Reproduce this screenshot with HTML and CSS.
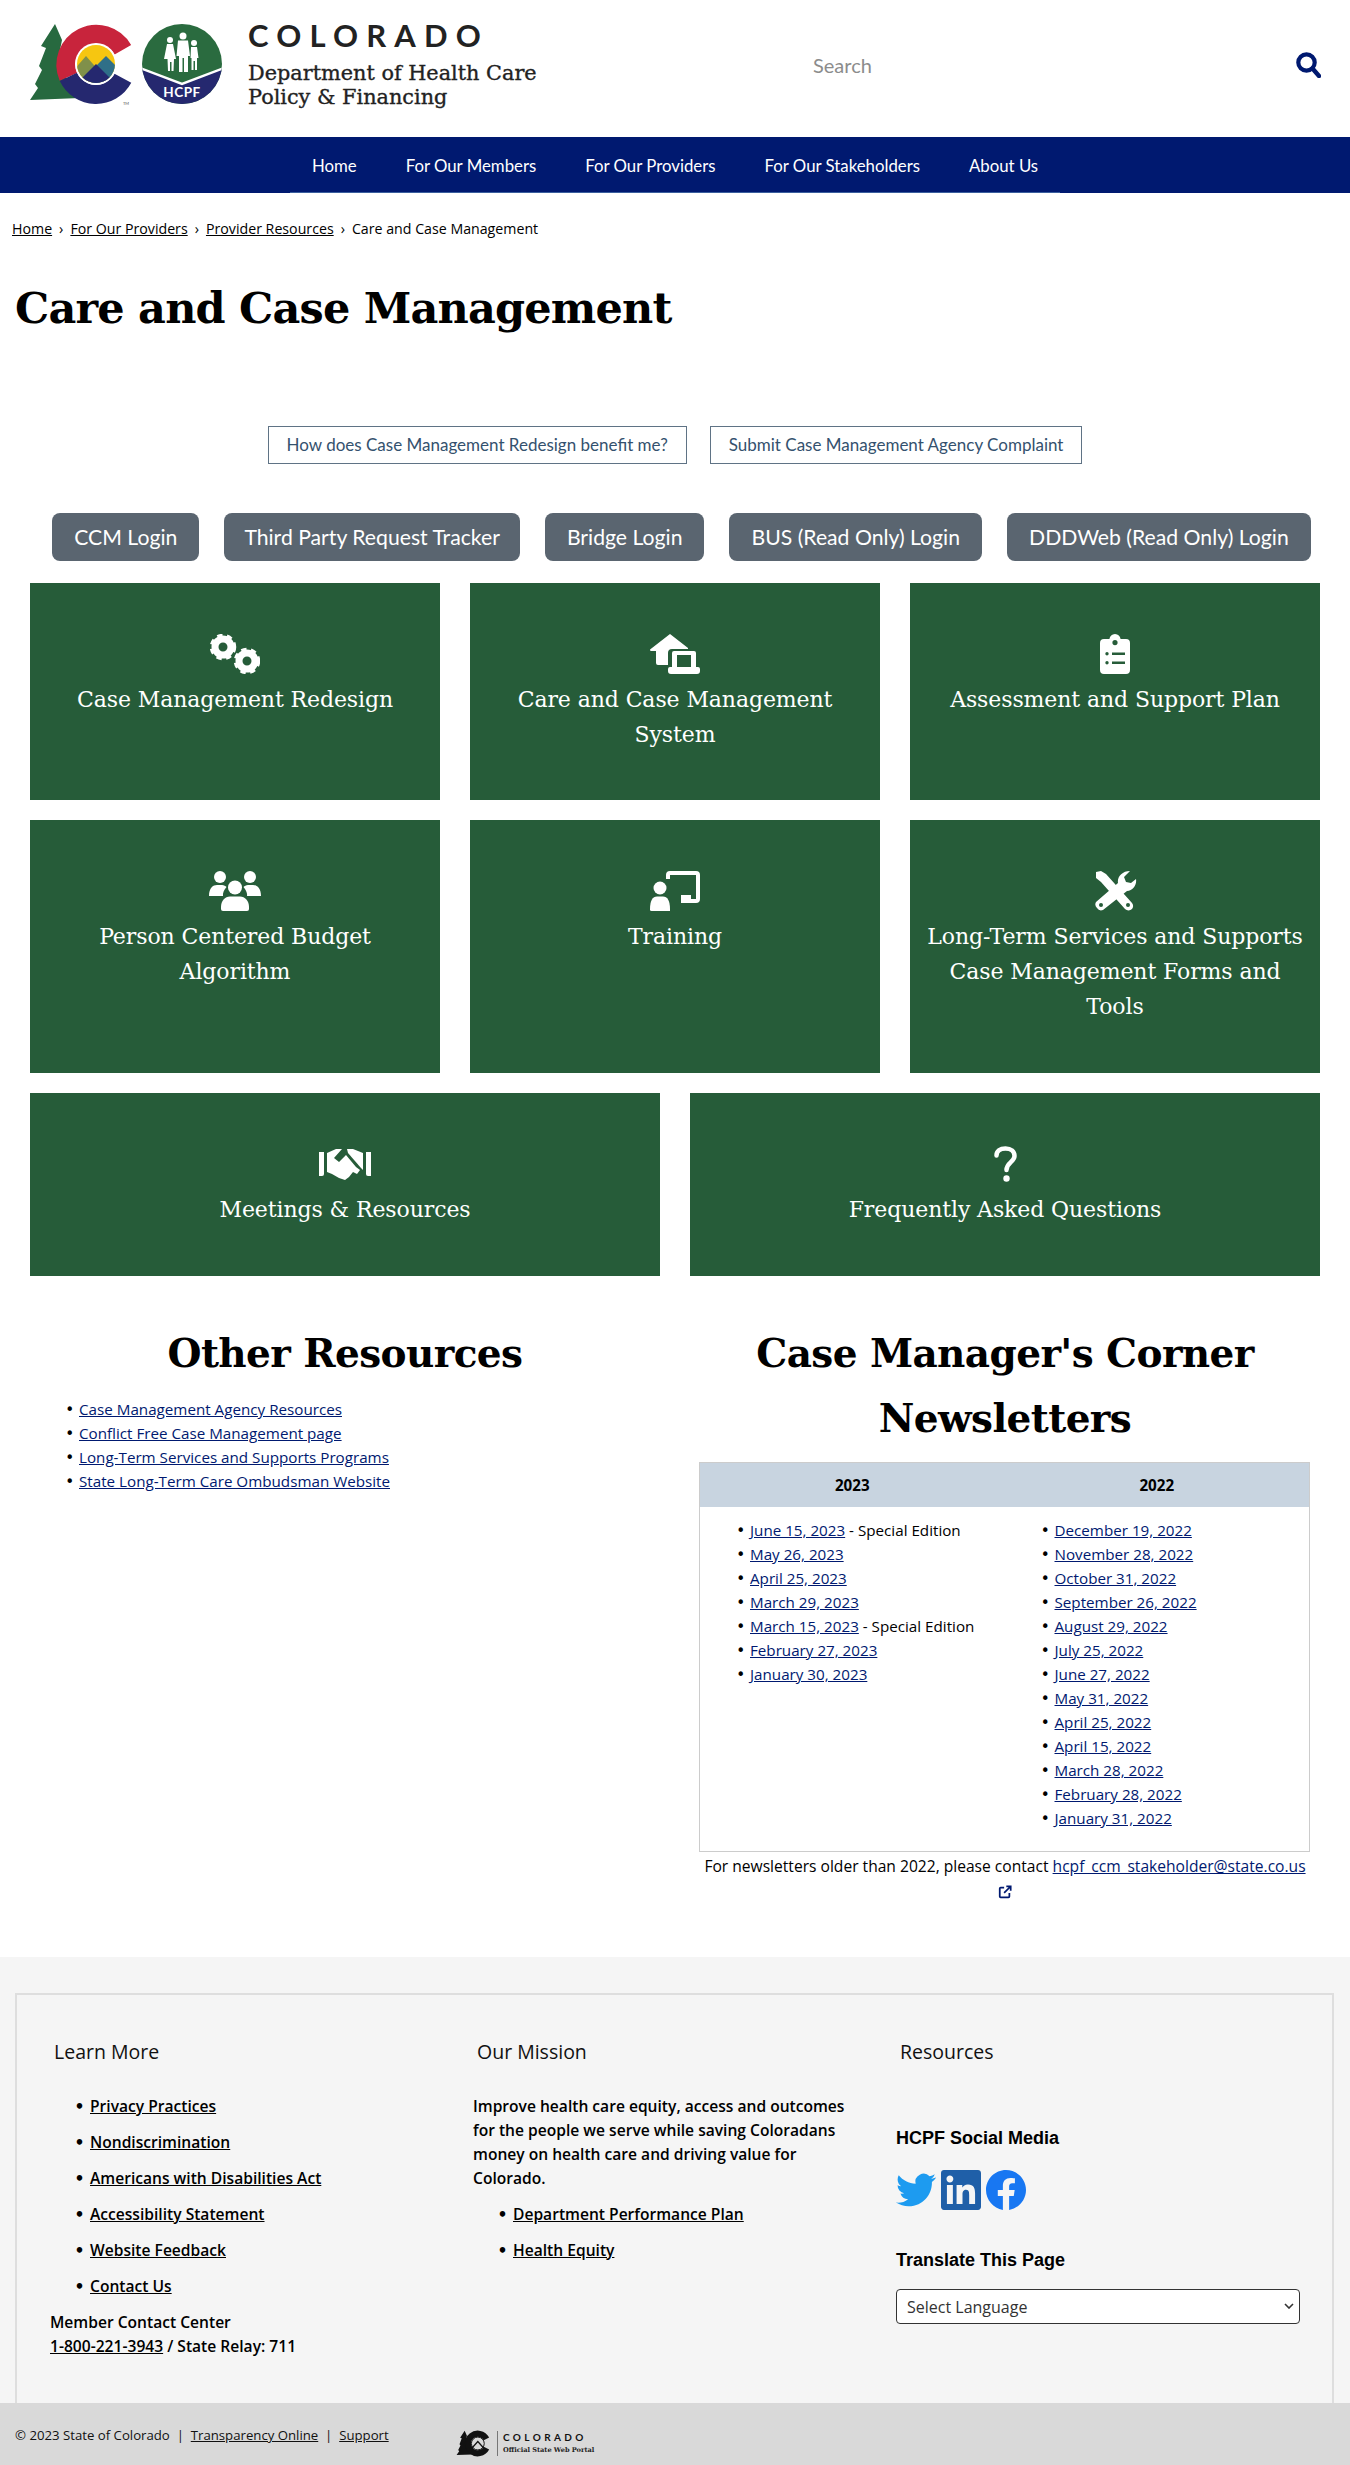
FILE: index.html
```html
<!DOCTYPE html>
<html lang="en">
<head>
<meta charset="utf-8">
<title>Care and Case Management</title>
<link rel="stylesheet" href="styles.css">
</head>
<body>
<header class="site-header">
  <a class="brand" href="#">
    <svg class="brand-mark" viewBox="25 20 205 90" width="205" height="90" aria-hidden="true">
      <defs>
        <clipPath id="sun"><circle cx="96" cy="64" r="19"/></clipPath>
        <clipPath id="disc"><circle cx="182" cy="64" r="40"/></clipPath>
      </defs>
      <path d="M55 24 L62 40 L60 50 L64 72 L72 92 L80 98 L30 100 L38 88 L35 84 L42 70 L39 66 L46 48 L41 46 Z" fill="#27693f"/>
      <path d="M122.9 49.7 A30.5 30.5 0 0 0 68.4 76.9" fill="none" stroke="#c8243c" stroke-width="19"/>
      <path d="M68.4 76.9 A30.5 30.5 0 0 0 122.9 78.3" fill="none" stroke="#25286f" stroke-width="19"/>
      <circle cx="96" cy="64" r="21" fill="#fff"/>
      <g clip-path="url(#sun)">
        <rect x="75" y="44" width="42" height="42" fill="#f6c611"/>
        <path d="M72 72 L86 56 L100 72 L100 90 L72 90 Z" fill="#80904a"/>
        <path d="M90 72 L106 56 L122 72 L122 90 L90 90 Z" fill="#2f6f88"/>
        <path d="M70 90 L96 64 L122 90 Z" fill="#25286f"/>
      </g>
      <g clip-path="url(#disc)">
        <rect x="142" y="24" width="80" height="80" fill="#2a6b3f"/>
        <path d="M140 68 L182 84 L224 68 L224 106 L140 106 Z" fill="#25286f" stroke="#fff" stroke-width="2.5"/>
      </g>
      <g fill="#fff">
        <circle cx="170" cy="40" r="3"/>
        <path d="M167 44 H173 L176 59 H174 L173.500 71 H171.500 V62 H170 V71 H168 L167.500 59 H164 Z"/>
        <circle cx="183" cy="36" r="3.500"/>
        <path d="M178 40.500 H188 L190 56 H188 V72 H184 V58 H182.500 V72 H179 V56 H176.500 Z"/>
        <circle cx="194" cy="43" r="3"/>
        <path d="M191 47 H197 L198.500 58 H197 V70 H195 V61 H193.500 V70 H191.500 V58 H190.500 Z"/>
      </g>
      <text class="hcpf" x="182" y="97" text-anchor="middle">HCPF</text>
      <text class="tm" x="123" y="105">TM</text>
      <rect x="235" y="24" width="1" height="80" fill="#555"/>
    </svg>
    <span class="brand-text">
      <span class="brand-state">COLORADO</span>
      <span class="brand-dept">Department of Health Care<br>Policy &amp; Financing</span>
    </span>
  </a>
  <form class="search">
    <input class="search-input" type="text" placeholder="Search" aria-label="Search">
    <svg class="search-icon" viewBox="0 0 25 26" width="25" height="26" aria-hidden="true">
      <circle cx="10.5" cy="10.5" r="8.2" fill="none" stroke="#001970" stroke-width="4.2"/>
      <path d="M16.5 16.5 L23 24" stroke="#001970" stroke-width="4.4" stroke-linecap="round"/>
    </svg>
  </form>
</header>

<nav class="main-nav">
  <ul class="main-nav-list">
    <li><a href="#">Home</a></li>
    <li><a href="#">For Our Members</a></li>
    <li><a href="#">For Our Providers</a></li>
    <li><a href="#">For Our Stakeholders</a></li>
    <li><a href="#">About Us</a></li>
  </ul>
</nav>

<main>
  <div class="breadcrumb">
    <a href="#">Home</a><span class="sep">›</span><a href="#">For Our Providers</a><span class="sep">›</span><a href="#">Provider Resources</a><span class="sep">›</span><span>Care and Case Management</span>
  </div>
  <h1 class="page-title">Care and Case Management</h1>

  <div class="pill-row">
    <a class="pill" href="#">How does Case Management Redesign benefit me?</a>
    <a class="pill" href="#">Submit Case Management Agency Complaint</a>
  </div>

  <div class="btn-row">
    <a class="btn" href="#">CCM Login</a>
    <a class="btn btn-tight" href="#">Third Party Request Tracker</a>
    <a class="btn" href="#">Bridge Login</a>
    <a class="btn" href="#">BUS (Read Only) Login</a>
    <a class="btn" href="#">DDDWeb (Read Only) Login</a>
  </div>

  <div class="tiles tiles-3 tiles-first">
    <a class="tile" href="#">
      <span class="tile-icon">
        <svg viewBox="0 0 50 40" width="50" height="40" aria-hidden="true">
          <g fill="none" stroke="#fff">
            <circle cx="13" cy="13" r="8" stroke-width="7"/>
            <circle cx="13" cy="13" r="11.5" stroke-width="3.5" stroke-dasharray="5.2 4.43"/>
            <circle cx="37" cy="27" r="8" stroke-width="7"/>
            <circle cx="37" cy="27" r="11.5" stroke-width="3.5" stroke-dasharray="5.2 4.43"/>
          </g>
        </svg>
      </span>
      Case Management Redesign
    </a>
    <a class="tile" href="#">
      <span class="tile-icon">
        <svg viewBox="0 0 50 40" width="50" height="40" aria-hidden="true">
          <path fill="#fff" d="M20 0 L38 14 L38 15 H22 a4 4 0 0 0-4 4 V31 H8 a2 2 0 0 1-2-2 V17 H1 a1 1 0 0 1-.6-1.8 Z"/>
          <path fill="#fff" fill-rule="evenodd" d="M24 17 H44 a2 2 0 0 1 2 2 V33 H48 a2 2 0 0 1 2 2 v2 a3 3 0 0 1-3 3 H21 a3 3 0 0 1-3-3 v-2 a2 2 0 0 1 2-2 H22 V19 a2 2 0 0 1 2-2 Z M27 21 V33 H41 V21 Z"/>
        </svg>
      </span>
      Care and Case Management System
    </a>
    <a class="tile" href="#">
      <span class="tile-icon">
        <svg viewBox="0 0 30 40" width="30" height="40" aria-hidden="true">
          <path fill="#fff" fill-rule="evenodd" d="M15 0 a6 6 0 0 1 5.6 5 H26 a4 4 0 0 1 4 4 V36 a4 4 0 0 1-4 4 H4 a4 4 0 0 1-4-4 V9 a4 4 0 0 1 4-4 H9.4 A6 6 0 0 1 15 0 Z M15 6 a2.6 2.6 0 1 0 0 5.2 a2.6 2.6 0 0 0 0-5.2 Z M7 18 a1.7 1.7 0 1 0 0 3.4 a1.7 1.7 0 0 0 0-3.4 Z M12 18.4 v2.6 H25 v-2.6 Z M7 27 a1.7 1.7 0 1 0 0 3.4 a1.7 1.7 0 0 0 0-3.4 Z M12 27.4 v2.6 H25 v-2.6 Z"/>
        </svg>
      </span>
      Assessment and Support Plan
    </a>
  </div>

  <div class="tiles tiles-3">
    <a class="tile" href="#">
      <span class="tile-icon">
        <svg viewBox="0 0 52 40" width="52" height="40" aria-hidden="true">
          <g fill="#fff">
            <circle cx="11" cy="6" r="6"/><circle cx="41" cy="6" r="6"/>
            <path d="M0 25 C0 17 4 14 8 14 H13 C15 14 16.5 15 17.5 16 C15 19 13.5 22 14 25 Z"/>
            <path d="M52 25 C52 17 48 14 44 14 H39 C37 14 35.500 15 34.500 16 C37 19 38.500 22 38 25 Z"/>
            <circle cx="26" cy="16.500" r="7"/>
            <path d="M12 36 C12 30 16 25.500 21 25.500 H31 C36 25.500 40 30 40 36 V38 A2 2 0 0 1 38 40 H14 A2 2 0 0 1 12 38 Z"/>
          </g>
        </svg>
      </span>
      Person Centered Budget Algorithm
    </a>
    <a class="tile" href="#">
      <span class="tile-icon">
        <svg viewBox="0 0 50 40" width="50" height="40" aria-hidden="true">
          <g fill="#fff">
            <path d="M16 4 a4 4 0 0 1 4-4 H46 a4 4 0 0 1 4 4 V28 a4 4 0 0 1-4 4 H33 V28 H46 V4 H20 V8 H16 Z"/>
            <path d="M31 24 H41 V32 H31 Z"/>
            <circle cx="10" cy="17" r="6.500"/>
            <path d="M0 38 C0 30 2.500 25.500 7 25.500 H13 C17.500 25.500 20 30 20 38 V40 H1.500 A1.500 1.500 0 0 1 0 38.500 Z"/>
          </g>
        </svg>
      </span>
      Training
    </a>
    <a class="tile" href="#">
      <span class="tile-icon">
        <svg viewBox="0 0 43 40" width="43" height="40" aria-hidden="true">
          <g fill="#fff">
            <path d="M2 1 L7 0 L12 3 L38 32 A5 5 0 0 1 38 38 A5 5 0 0 1 31 38 L7 11 L2 7 Z"/>
            <path d="M42 8 C43 14 39 20 33 20 L9 39 A5 5 0 0 1 3 37 A5 5 0 0 1 2 31 L24 12 C23 6 28 0 36 0 L30 6 L32 11 L37 12 Z"/>
            <circle cx="34" cy="34" r="2" fill="#265c39"/>
            <circle cx="7" cy="34" r="2" fill="#265c39"/>
          </g>
        </svg>
      </span>
      Long-Term Services and Supports Case Management Forms and Tools
    </a>
  </div>

  <div class="tiles tiles-2">
    <a class="tile" href="#">
      <span class="tile-icon tile-icon-shake">
        <svg viewBox="0 0 52 32" width="52" height="32" aria-hidden="true">
          <g fill="#fff">
            <path d="M0 4 H5 V26 a2 2 0 0 1-2 2 H0 Z"/>
            <path d="M52 4 H47 V26 a2 2 0 0 0 2 2 H52 Z"/>
            <path d="M8 5 L17 1 L23 1 L15 10 L20 14 L27 7 L37 19 L41 22 L38 26 L34 24 L30 29 L26 32 L20 30 L13 26 L8 24 Z"/>
            <path d="M28 1 H34 L44 5 V22 L42 20 L29 5 Z"/>
          </g>
        </svg>
      </span>
      Meetings &amp; Resources
    </a>
    <a class="tile" href="#">
      <span class="tile-icon tile-icon-help">
        <svg viewBox="0 0 25 36" width="25" height="36" aria-hidden="true">
          <path d="M3.500 9.500 C3.500 5 7 2.500 12.500 2.500 C18 2.500 21.500 5.500 21.500 10 C21.500 16 13.500 16.500 13.500 24" fill="none" stroke="#fff" stroke-width="4.500" stroke-linecap="round"/>
          <circle cx="13.500" cy="32.500" r="3.200" fill="#fff"/>
        </svg>
      </span>
      Frequently Asked Questions
    </a>
  </div>

  <div class="resources">
    <section class="res-col">
      <h2 class="res-title">Other Resources</h2>
      <ul class="res-list">
        <li><a href="#">Case Management Agency Resources</a></li>
        <li><a href="#">Conflict Free Case Management page</a></li>
        <li><a href="#">Long-Term Services and Supports Programs</a></li>
        <li><a href="#">State Long-Term Care Ombudsman Website</a></li>
      </ul>
    </section>
    <section class="res-col">
      <h2 class="res-title">Case Manager's Corner Newsletters</h2>
      <table class="news">
        <thead><tr><th>2023</th><th>2022</th></tr></thead>
        <tbody><tr>
          <td><ul>
            <li><a href="#">June 15, 2023</a> - Special Edition</li>
            <li><a href="#">May 26, 2023</a></li>
            <li><a href="#">April 25, 2023</a></li>
            <li><a href="#">March 29, 2023</a></li>
            <li><a href="#">March 15, 2023</a> - Special Edition</li>
            <li><a href="#">February 27, 2023</a></li>
            <li><a href="#">January 30, 2023</a></li>
          </ul></td>
          <td><ul>
            <li><a href="#">December 19, 2022</a></li>
            <li><a href="#">November 28, 2022</a></li>
            <li><a href="#">October 31, 2022</a></li>
            <li><a href="#">September 26, 2022</a></li>
            <li><a href="#">August 29, 2022</a></li>
            <li><a href="#">July 25, 2022</a></li>
            <li><a href="#">June 27, 2022</a></li>
            <li><a href="#">May 31, 2022</a></li>
            <li><a href="#">April 25, 2022</a></li>
            <li><a href="#">April 15, 2022</a></li>
            <li><a href="#">March 28, 2022</a></li>
            <li><a href="#">February 28, 2022</a></li>
            <li><a href="#">January 31, 2022</a></li>
          </ul></td>
        </tr></tbody>
      </table>
      <p class="news-note">For newsletters older than 2022, please contact <a href="#">hcpf_ccm_stakeholder@state.co.us</a>
        <svg class="ext" viewBox="0 0 16 16" width="14" height="14" aria-hidden="true">
          <path d="M7 3 H3 a1 1 0 0 0-1 1 V13 a1 1 0 0 0 1 1 H12 a1 1 0 0 0 1-1 V9 M9.500 1.500 H14.500 V6.500 M14 2 L7 9" fill="none" stroke="#001970" stroke-width="2"/>
        </svg>
      </p>
    </section>
  </div>
</main>

<footer class="site-footer">
  <div class="footer-box">
    <section class="fcol fcol-learn">
      <h3 class="fhead">Learn More</h3>
      <ul class="flinks">
        <li><a href="#">Privacy Practices</a></li>
        <li><a href="#">Nondiscrimination</a></li>
        <li><a href="#">Americans with Disabilities Act</a></li>
        <li><a href="#">Accessibility Statement</a></li>
        <li><a href="#">Website Feedback</a></li>
        <li><a href="#">Contact Us</a></li>
      </ul>
      <p class="ftext">Member Contact Center<br><a href="#">1-800-221-3943</a> / State Relay: 711</p>
    </section>
    <section class="fcol fcol-mission">
      <h3 class="fhead">Our Mission</h3>
      <p class="ftext">Improve health care equity, access and outcomes for the people we serve while saving Coloradans money on health care and driving value for Colorado.</p>
      <ul class="flinks flinks-tight">
        <li><a href="#">Department Performance Plan</a></li>
        <li><a href="#">Health Equity</a></li>
      </ul>
    </section>
    <section class="fcol fcol-res">
      <h3 class="fhead">Resources</h3>
      <h4 class="fsub fsub-social">HCPF Social Media</h4>
      <div class="social">
        <svg viewBox="0 0 24 24" width="40" height="40" preserveAspectRatio="none" aria-label="Twitter"><path fill="#1d9bf0" d="M23.953 4.57a10 10 0 01-2.825.775 4.958 4.958 0 002.163-2.723c-.951.555-2.005.959-3.127 1.184a4.92 4.92 0 00-8.384 4.482C7.69 8.095 4.067 6.13 1.64 3.162a4.822 4.822 0 00-.666 2.475c0 1.71.87 3.213 2.188 4.096a4.904 4.904 0 01-2.228-.616v.06a4.923 4.923 0 003.946 4.827 4.996 4.996 0 01-2.212.085 4.936 4.936 0 004.604 3.417 9.867 9.867 0 01-6.102 2.105c-.39 0-.779-.023-1.17-.067a13.995 13.995 0 007.557 2.209c9.053 0 13.998-7.496 13.998-13.985 0-.21 0-.42-.015-.63A9.935 9.935 0 0024 4.59z"/></svg>
        <svg viewBox="0 0 24 24" width="40" height="40" preserveAspectRatio="none" aria-label="LinkedIn"><path fill="#1f5fa8" d="M20.447 20.452h-3.554v-5.569c0-1.328-.027-3.037-1.852-3.037-1.853 0-2.136 1.445-2.136 2.939v5.667H9.351V9h3.414v1.561h.046c.477-.9 1.637-1.85 3.37-1.85 3.601 0 4.267 2.37 4.267 5.455v6.286zM5.337 7.433c-1.144 0-2.063-.926-2.063-2.065 0-1.138.92-2.063 2.063-2.063 1.14 0 2.064.925 2.064 2.063 0 1.139-.925 2.065-2.064 2.065zm1.782 13.019H3.555V9h3.564v11.452zM22.225 0H1.771C.792 0 0 .774 0 1.729v20.542C0 23.227.792 24 1.771 24h20.451C23.2 24 24 23.227 24 22.271V1.729C24 .774 23.2 0 22.222 0h.003z"/></svg>
        <svg viewBox="0 0 24 24" width="40" height="40" preserveAspectRatio="none" aria-label="Facebook"><path fill="#1877f2" d="M24 12.073c0-6.627-5.373-12-12-12s-12 5.373-12 12c0 5.99 4.388 10.954 10.125 11.854v-8.385H7.078v-3.47h3.047V9.43c0-3.007 1.792-4.669 4.533-4.669 1.312 0 2.686.235 2.686.235v2.953H15.83c-1.491 0-1.956.925-1.956 1.874v2.25h3.328l-.532 3.47h-2.796v8.385C19.612 23.027 24 18.062 24 12.073z"/></svg>
      </div>
      <h4 class="fsub">Translate This Page</h4>
      <div class="lang-wrap">
        <select class="lang" aria-label="Select Language"><option>Select Language</option></select>
        <svg class="lang-arrow" viewBox="0 0 10 6" width="10" height="6" aria-hidden="true"><path d="M1 1 L5 5 L9 1" fill="none" stroke="#333" stroke-width="1.600"/></svg>
      </div>
    </section>
  </div>
  <div class="legal">
    <span class="legal-text">© 2023 State of Colorado &nbsp;|&nbsp; <a href="#">Transparency Online</a> &nbsp;|&nbsp; <a href="#">Support</a></span>
    <span class="legal-logo">
      <svg viewBox="25 20 112 88" width="36" height="29" aria-hidden="true">
        <path d="M55 24 L62 40 L60 50 L64 72 L72 92 L80 98 L30 100 L38 88 L35 84 L42 70 L39 66 L46 48 L41 46 Z" fill="#111"/>
        <path d="M122.900 49.700 A30.500 30.500 0 1 0 122.900 78.300" fill="none" stroke="#111" stroke-width="19"/>
        <circle cx="96" cy="64" r="20" fill="#d9d9d9" stroke="#111" stroke-width="3"/>
        <path d="M78 78 L96 58 L114 78" fill="none" stroke="#111" stroke-width="4"/>
      </svg>
      <span class="legal-brand">
        <span class="legal-state">COLORADO</span>
        <span class="legal-portal">Official State Web Portal</span>
      </span>
    </span>
  </div>
</footer>
</body>
</html>
```

FILE: styles.css
```css
* { box-sizing: border-box; }
html, body { margin: 0; padding: 0; }
body {
  font-family: "Open Sans", "Noto Sans", sans-serif;
  font-size: 15.2px;
  line-height: 24px;
  color: #000;
  background: #fff;
}
a { color: inherit; }
li::marker { content: "• "; font-family: "DejaVu Sans", sans-serif; color: #000; }

.site-header {
  display: flex;
  align-items: flex-start;
  justify-content: space-between;
  height: 137px;
}
.brand {
  display: flex;
  margin: 20px 0 0 25px;
  color: #222;
  text-decoration: none;
}
.brand-mark { display: block; flex: none; }
.hcpf { font: 700 13.5px "Lato", sans-serif; fill: #fff; letter-spacing: .5px; }
.tm { font: 400 4px "Lato", sans-serif; fill: #555; }
.brand-text { display: flex; flex-direction: column; margin-left: 18px; }
.brand-state {
  font: 700 31px/31px "Lato", sans-serif;
  letter-spacing: 8.2px;
  color: #222;
}
.brand-dept {
  margin-top: 10px;
  font: 400 20.8px/24px "DejaVu Serif", serif;
  -webkit-text-stroke: .35px #222;
  color: #222;
}
.search {
  display: flex;
  align-items: center;
  width: 508px;
  height: 26px;
  margin: 52px 29px 0 0;
}
.search-input {
  flex: 1;
  min-width: 0;
  padding: 0;
  border: 0;
  background: none;
  font: 400 20px/26px "Lato", sans-serif;
  color: #888;
}
.search-input::placeholder { color: #8c8c8c; opacity: 1; }

.main-nav { height: 56px; background: #001970; }
.main-nav-list {
  display: flex;
  justify-content: center;
  gap: 49px;
  width: 770px;
  height: 56px;
  margin: 0 auto;
  padding: 0;
  list-style: none;
  border-bottom: 1px solid #3b5f9e;
}
.main-nav-list li::marker { content: none; }
.main-nav-list a {
  display: block;
  font: 400 16.8px/57px "Lato", sans-serif;
  color: #fff;
  text-decoration: none;
}

.breadcrumb {
  padding: 24px 0 0 12px;
  font-size: 14.2px;
  line-height: 24px;
  color: #000;
}
.sep { margin: 0 7px; }
.page-title {
  margin: 35px 0 0 15px;
  font: 700 43px/64px "DejaVu Serif", serif;
  letter-spacing: -.8px;
  color: #000;
}

.pill-row {
  display: flex;
  justify-content: center;
  gap: 23px;
  margin-top: 86px;
}
.pill {
  display: block;
  height: 38px;
  padding: 0 18px;
  border: 1px solid #5f7385;
  font: 400 17px/36px "Lato", sans-serif;
  color: #34516e;
  text-decoration: none;
}
.btn-row {
  display: flex;
  justify-content: center;
  gap: 25px;
  margin-top: 49px;
  padding-left: 13px;
}
.btn {
  display: block;
  height: 48px;
  padding: 0 22px;
  border-radius: 8px;
  background: #5a6570;
  font: 400 21.2px/48px "Lato", sans-serif;
  color: #fff;
  text-decoration: none;
}
.btn-tight { padding: 0 20px; }

.tiles {
  display: grid;
  gap: 30px;
  margin: 20px 30px 0;
}
.tiles-first { margin-top: 22px; }
.tiles-first .tile { padding-bottom: 48px; }
.tiles-3 { grid-template-columns: repeat(3, 1fr); }
.tiles-2 { grid-template-columns: repeat(2, 1fr); }
.tile {
  display: block;
  padding: 50px 14px 49px;
  background: #265c39;
  font: 400 22px/35px "DejaVu Serif", serif;
  letter-spacing: -.1px;
  text-align: center;
  color: #fff;
  text-decoration: none;
}
.tile-icon {
  display: flex;
  justify-content: center;
  align-items: flex-start;
  height: 49px;
  padding-top: 1px;
}
.tile-icon-shake { padding-top: 5px; }
.tile-icon-help { padding-top: 3px; }

.resources {
  display: grid;
  grid-template-columns: repeat(2, 1fr);
  gap: 30px;
  margin: 45px 30px 0;
}
.res-title {
  margin: 0;
  font: 700 39px/65px "DejaVu Serif", serif;
  letter-spacing: -.6px;
  text-align: center;
}
.res-list {
  margin: 11px 0 0;
  padding: 0 0 0 49px;
  line-height: 24px;
  color: #001970;
}
.news {
  width: 611px;
  margin: 11px 0 0 9px;
  border-collapse: collapse;
  table-layout: fixed;
  border: 1px solid #ccc;
}
.news th {
  height: 44px;
  padding: 0;
  background: #c8d4e0;
  font-weight: 700;
  text-align: center;
}
.news td {
  height: 345px;
  padding: 11px 0 0;
  vertical-align: top;
}
.news ul {
  margin: 0;
  padding: 0 0 0 50px;
  line-height: 24px;
}
.news a { color: #001970; }
.news-note {
  margin: 2px 0 0;
  padding: 0 9px;
  font-size: 15.6px;
  line-height: 25px;
  text-align: center;
}
.news-note a { color: #001970; }
.ext { display: inline-block; vertical-align: -2px; }

.site-footer {
  height: 509px;
  margin-top: 53px;
  background: #f5f5f5;
  padding-top: 36px;
}
.footer-box {
  display: grid;
  grid-template-columns: 423px 423px 1fr;
  height: 410px;
  margin: 0 16px 0 15px;
  border: 2px solid #dedede;
  border-bottom: 0;
}
.fcol-learn, .fcol-mission, .fcol-res { padding: 42px 0 0 33px; }
.fhead {
  margin: 0 0 0 4px;
  font: 400 19.5px/30px "Open Sans", sans-serif;
  color: #111;
}
.flinks {
  margin: 27px 0 0;
  padding: 0 0 0 40px;
  font-size: 15.6px;
  font-weight: 600;
  line-height: 24px;
  color: #000;
}
.flinks li { margin-bottom: 12px; }
.flinks-tight { margin-top: 0; }
.ftext {
  margin: 0;
  font-size: 15.6px;
  font-weight: 600;
  line-height: 24px;
}
.fcol-mission .ftext { width: 380px; margin: 27px 0 12px; }
.fsub {
  margin: 0;
  font: 700 18px/24px "Liberation Sans", sans-serif;
  color: #000;
}
.fsub-social { margin-top: 59px; }
.social { display: flex; gap: 5px; margin: 20px 0 38px; }
.social svg { display: block; }
.lang-wrap {
  position: relative;
  width: 404px;
  margin-top: 17px;
}
.lang {
  display: block;
  width: 100%;
  height: 35px;
  padding: 0 10px;
  border: 1px solid #333;
  border-radius: 4px;
  background: #fff;
  font: 400 16px "Open Sans", sans-serif;
  color: #333;
  appearance: none;
}
.lang-arrow { position: absolute; right: 6px; top: 14px; pointer-events: none; }

.legal {
  position: relative;
  height: 63px;
  padding: 20px 0 0 15px;
  background: #d9d9d9;
  font-size: 13.2px;
  line-height: 24px;
  color: #111;
}
.legal-logo {
  position: absolute;
  left: 455px;
  top: 26px;
  display: flex;
  align-items: center;
  gap: 6px;
}
.legal-brand {
  display: flex;
  flex-direction: column;
  padding-left: 5px;
  border-left: 1px solid #777;
}
.legal-state { font: 700 10px/13px "Lato", sans-serif; letter-spacing: 3.4px; color: #111; }
.legal-portal { font: 700 6.6px/12px "DejaVu Serif", serif; color: #222; }
```
